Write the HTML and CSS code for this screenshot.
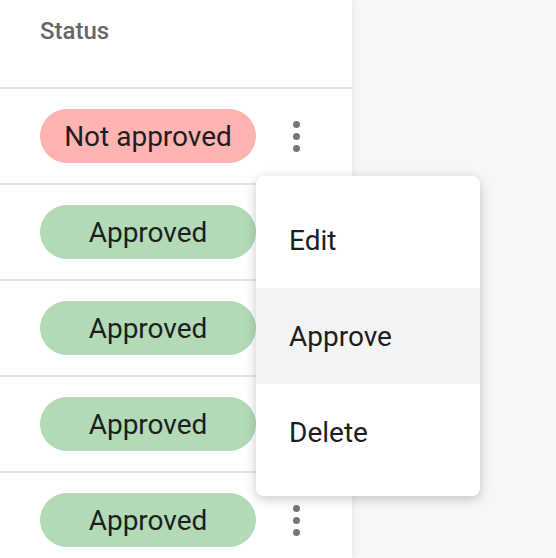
FILE: index.html
```html
<!DOCTYPE html>
<html lang="en">
<head>
    <meta charset="UTF-8">
    <meta name="viewport" content="width=device-width, initial-scale=1.0">
    <title>Status list</title>
    <link rel="stylesheet" href="styles.css">
</head>
<body>
<div class="panel">
    <div class="head-row">Status</div>

    <div class="row">
        <span class="pill pill-no">Not approved</span>
        <button class="kebab" aria-label="More"><span></span><span></span><span></span></button>
    </div>
    <div class="row">
        <span class="pill pill-ok">Approved</span>
    </div>
    <div class="row">
        <span class="pill pill-ok">Approved</span>
    </div>
    <div class="row">
        <span class="pill pill-ok">Approved</span>
    </div>
    <div class="row">
        <span class="pill pill-ok">Approved</span>
        <button class="kebab" aria-label="More"><span></span><span></span><span></span></button>
    </div>

    <!-- open row menu -->
    <ul class="menu">
        <li>Edit</li>
        <li class="active">Approve</li>
        <li>Delete</li>
    </ul>
</div>
</body>
</html>
```

FILE: styles.css
```css
/* General styles */
body {
    font-family: Roboto, "Liberation Sans", Arial, sans-serif;
    background-color: #f7f7f7;
    margin: 0;
    padding: 0;
    overflow: hidden;
}

/* Table panel */
.panel {
    position: relative;
    width: 352px;
    height: 558px;
    background-color: #fff;
    box-shadow: 2px 0 6px rgba(0, 0, 0, 0.06);
}

.head-row {
    box-sizing: border-box;
    height: 89px;
    padding: 17px 0 0 40px;
    font-size: 24px;
    font-weight: 500;
    color: #666;
    border-bottom: 2px solid #e4e4e4;
}

.row {
    box-sizing: border-box;
    height: 96px;
    display: flex;
    align-items: center;
    gap: 20px;
    padding-left: 40px;
    border-bottom: 2px solid #e4e4e4;
}

/* Status pills */
.pill {
    display: flex;
    align-items: center;
    justify-content: center;
    width: 216px;
    height: 54px;
    border-radius: 27px;
    font-size: 28px;
    color: #1e1e1e;
}

.pill-no {
    background-color: #ffb3b3;
}

.pill-ok {
    background-color: #b3dab6;
}

/* Three dot button */
.kebab {
    display: flex;
    flex-direction: column;
    align-items: center;
    gap: 5px;
    width: 40px;
    padding: 0;
    border: none;
    background: none;
}

.kebab span {
    width: 7px;
    height: 7px;
    border-radius: 50%;
    background-color: #767676;
}

/* Dropdown menu */
.menu {
    position: absolute;
    left: 256px;
    top: 176px;
    width: 224px;
    margin: 0;
    padding: 16px 0;
    list-style: none;
    background-color: #fff;
    border-radius: 8px;
    box-shadow: 0 3px 12px rgba(0, 0, 0, 0.22);
}

.menu li {
    height: 96px;
    display: flex;
    align-items: center;
    padding-left: 33px;
    font-size: 28px;
    color: #1e1e1e;
}

.menu li.active {
    background-color: #f3f3f3;
}
```
